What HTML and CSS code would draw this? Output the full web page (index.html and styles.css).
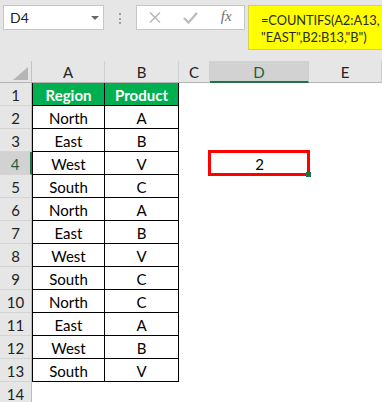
FILE: index.html
```html
<!DOCTYPE html>
<html lang="en">
<head>
    <meta charset="UTF-8">
    <title>COUNTIFS</title>
    <link rel="stylesheet" href="styles.css">
</head>
<body>
    <div class="toolbar">
        <div class="namebox">
            <span>D4</span>
            <span class="arrow"></span>
        </div>
        <div class="grip"><i></i><i></i><i></i></div>
        <div class="fbox">
            <span class="fbtn">
                <svg width="12" height="11" viewBox="0 0 12 11"><path d="M1 0.5L11 10.5M11 0.5L1 10.5" stroke="#b4b4b4" stroke-width="1.4" fill="none"/></svg>
            </span>
            <span class="fbtn">
                <svg width="15" height="12" viewBox="0 0 15 12"><path d="M1 6L5.5 10.5L14 1" stroke="#bdbdbd" stroke-width="2.4" fill="none"/></svg>
            </span>
            <span class="fbtn fx">fx</span>
        </div>
        <div class="formula">=COUNTIFS(A2:A13,<br>"EAST",B2:B13,"B")</div>
    </div>

    <div class="sheet">
        <div class="corner">
            <svg width="15" height="13" viewBox="0 0 15 13"><polygon points="15,0 15,13 0,13" fill="#b6b6b6"/></svg>
        </div>
        <div class="colhead">A</div>
        <div class="colhead">B</div>
        <div class="colhead">C</div>
        <div class="colhead sel">D</div>
        <div class="colhead">E</div>

        <div class="rowhead">1</div>
        <div class="t a hd">Region</div>
        <div class="t hd">Product</div>
        <div></div><div></div><div></div>

        <div class="rowhead">2</div>
        <div class="t a">North</div>
        <div class="t">A</div>
        <div></div><div></div><div></div>

        <div class="rowhead">3</div>
        <div class="t a">East</div>
        <div class="t">B</div>
        <div></div><div></div><div></div>

        <div class="rowhead sel">4</div>
        <div class="t a">West</div>
        <div class="t">V</div>
        <div></div>
        <div class="active">2</div>
        <div></div>

        <div class="rowhead">5</div>
        <div class="t a">South</div>
        <div class="t">C</div>
        <div></div><div></div><div></div>

        <div class="rowhead">6</div>
        <div class="t a">North</div>
        <div class="t">A</div>
        <div></div><div></div><div></div>

        <div class="rowhead">7</div>
        <div class="t a">East</div>
        <div class="t">B</div>
        <div></div><div></div><div></div>

        <div class="rowhead">8</div>
        <div class="t a">West</div>
        <div class="t">V</div>
        <div></div><div></div><div></div>

        <div class="rowhead">9</div>
        <div class="t a">South</div>
        <div class="t">C</div>
        <div></div><div></div><div></div>

        <div class="rowhead">10</div>
        <div class="t a">North</div>
        <div class="t">C</div>
        <div></div><div></div><div></div>

        <div class="rowhead">11</div>
        <div class="t a">East</div>
        <div class="t">A</div>
        <div></div><div></div><div></div>

        <div class="rowhead">12</div>
        <div class="t a">West</div>
        <div class="t">B</div>
        <div></div><div></div><div></div>

        <div class="rowhead">13</div>
        <div class="t a">South</div>
        <div class="t">V</div>
        <div></div><div></div><div></div>

        <div class="rowhead">14</div>
        <div></div><div></div><div></div><div></div><div></div>
    </div>
</body>
</html>
```

FILE: styles.css
```css
body{
    margin: 0;
    overflow: hidden;
    background: #fff;
    font-family: "Lato", "Liberation Sans", sans-serif;
    color: #111;
}

.toolbar{
    height: 61px;
    box-sizing: border-box;
    background: #e6e6e6;
    display: flex;
    align-items: flex-start;
    padding: 5px 0 0 3px;
}

.namebox{
    flex: none;
    width: 101px;
    height: 25px;
    box-sizing: border-box;
    background: #fff;
    border: 1px solid #c6c6c6;
    display: flex;
    align-items: center;
    justify-content: space-between;
    padding: 0 4px 0 6px;
    font-size: 14px;
    color: #222;
}
.arrow{
    width: 0;
    height: 0;
    border-left: 4px solid transparent;
    border-right: 4px solid transparent;
    border-top: 4px solid #666;
}

.grip{
    flex: none;
    width: 32px;
    display: flex;
    flex-direction: column;
    align-items: center;
    gap: 2.5px;
    padding-top: 8px;
}
.grip i{
    width: 2px;
    height: 2px;
    background: #a0a0a0;
}

.fbox{
    flex: none;
    width: 109px;
    height: 25px;
    box-sizing: border-box;
    background: #fff;
    border: 1px solid #c6c6c6;
    display: grid;
    grid-template-columns: 1fr 1fr 1fr;
    align-items: center;
}
.fbtn{
    display: flex;
    justify-content: center;
    align-items: center;
}
.fx{
    font-family: "Liberation Serif", serif;
    font-style: italic;
    font-size: 15px;
    color: #707070;
    padding-bottom: 2px;
}

.formula{
    flex: 1;
    min-width: 0;
    overflow: hidden;
    margin-left: 3px;
    height: 45px;
    box-sizing: border-box;
    background: #ffff00;
    border: 1px solid #d2d25a;
    border-right: none;
    padding: 6px 0 0 12px;
    font-size: 12.8px;
    letter-spacing: -0.05px;
    line-height: 17px;
    color: #2a2a2a;
    white-space: nowrap;
}

.sheet{
    display: grid;
    grid-template-columns: 32px 73px 74px 31px 99px 1fr;
    grid-template-rows: 22px;
    grid-auto-rows: 23px;
    font-size: 15px;
}
.sheet > div{
    box-sizing: border-box;
    display: flex;
    align-items: center;
    justify-content: center;
    padding-top: 1px;
}

.corner{
    background: #e6e6e6;
    border-right: 1px solid #c2c2c2;
    border-bottom: 1px solid #b4b4b4;
}
.sheet > .corner{
    justify-content: flex-end;
    align-items: flex-end;
    padding: 0 3px 2px 0;
}

.colhead{
    background: #e6e6e6;
    border-right: 1px solid #d0d0d0;
    border-bottom: 1px solid #b4b4b4;
    color: #222;
}
.colhead.sel{
    background: #d2d2d2;
    border-bottom: 2px solid #217346;
    color: #1f5f3c;
}

.rowhead{
    background: #e6e6e6;
    border-right: 1px solid #bcbcbc;
    border-bottom: 1px solid #d4d4d4;
    color: #222;
}
.rowhead.sel{
    background: #d2d2d2;
    border-right: 2px solid #217346;
    color: #1f5f3c;
}

.t{
    border-right: 1px solid #000;
    border-bottom: 1px solid #000;
    color: #000;
}
.t.a{
    border-left: 1px solid #000;
}
.t.hd{
    background: #00b050;
    color: #fff;
    font-weight: bold;
}

.active{
    position: relative;
    color: #000;
}
.active::before{
    content: "";
    position: absolute;
    left: -2px;
    top: -2px;
    right: -1px;
    bottom: -1px;
    border: 3px solid #ff0000;
}
.active::after{
    content: "";
    position: absolute;
    right: -2px;
    bottom: -2px;
    width: 5px;
    height: 5px;
    background: #217346;
}
```
